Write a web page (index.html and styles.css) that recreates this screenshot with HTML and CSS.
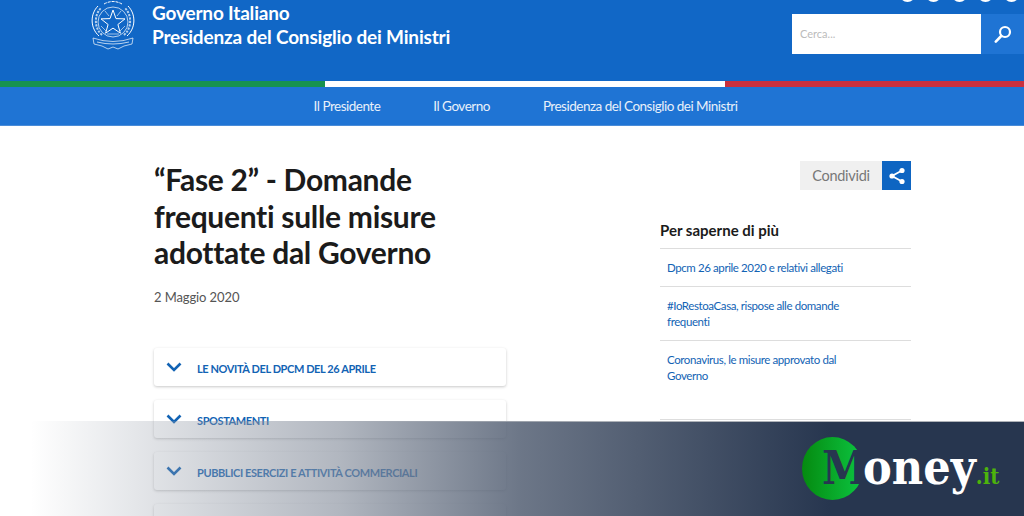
FILE: index.html
```html
<!DOCTYPE html>
<html lang="it">
<head>
<meta charset="utf-8">
<title>Fase 2 - Domande frequenti</title>
<link rel="stylesheet" href="styles.css">
</head>
<body>
<header class="top">
  <div class="brand">
    <svg class="emblem" viewBox="0 0 46 52" fill="none" stroke="#fff" stroke-width=".7">
      <circle cx="23" cy="23" r="15"/>
      <path d="M9 37C0 29 0 15 8 7M37 37c9-8 9-22 1-30" stroke-width="1"/>
      <path d="M12 36C4 29 4 16 11 9M34 36c8-7 8-20 1-27" stroke-width="2" stroke-dasharray="2.2 1.2" opacity=".7"/>
      <path d="M14 5q9-5 18 0" stroke-width="1" stroke-dasharray="3 1"/>
      <path d="M23 11l3 8.6 9 .3-7.1 5.6 2.5 8.7-7.4-5.1-7.4 5.1 2.5-8.7-7.1-5.6 9-.3z" stroke-width="1"/>
      <path d="M15 12l4 5M31 12l-4 5M11 27l5 5M35 27l-5 5M17 35h12" stroke-width=".6"/>
      <path d="M3 39q20 7 40 0l-1 6-8 2-6 3-5-2-5 2-6-3-8-2z" fill="#1167c6" stroke-width=".8" stroke-opacity=".85"/>
      <path d="M7 43q16 4 32 0" stroke-width=".7"/>
    </svg>
    <div class="brand-text">
      <div>Governo Italiano</div>
      <div>Presidenza del Consiglio dei Ministri</div>
    </div>
  </div>
  <div class="tools">
    <div class="socials"><i></i><i></i><i></i><i></i><i></i></div>
    <form class="search">
      <span class="search-input">Cerca...</span>
      <span class="search-btn">
        <svg viewBox="0 0 18 18" width="18" height="18" fill="none" stroke="#fff">
          <circle cx="11" cy="7" r="5" stroke-width="2.2"/>
          <path d="M7.2 11 1.8 16.6" stroke-width="2.6" stroke-linecap="round"/>
        </svg>
      </span>
    </form>
  </div>
</header>
<div class="tricolor"><span class="green"></span><span class="white"></span><span class="red"></span></div>
<nav class="nav">
  <a>Il Presidente</a>
  <a>Il Governo</a>
  <a>Presidenza del Consiglio dei Ministri</a>
</nav>
<main class="main">
  <section class="article">
    <h1>“Fase 2” - Domande frequenti sulle misure adottate dal Governo</h1>
    <p class="date">2 Maggio 2020</p>
    <div class="accordion">
      <div class="acc"><svg class="chev" viewBox="0 0 16 10"><path d="M1.5 1.5 8 8l6.5-6.5"/></svg><span>Le novità del DPCM del 26 aprile</span></div>
      <div class="acc"><svg class="chev" viewBox="0 0 16 10"><path d="M1.5 1.5 8 8l6.5-6.5"/></svg><span>Spostamenti</span></div>
      <div class="acc"><svg class="chev" viewBox="0 0 16 10"><path d="M1.5 1.5 8 8l6.5-6.5"/></svg><span>Pubblici esercizi e attività commerciali</span></div>
      <div class="acc"></div>
    </div>
  </section>
  <aside class="side">
    <div class="share">
      <span class="share-label">Condividi</span>
      <span class="share-btn">
        <svg viewBox="0 0 18 18" width="18" height="18" fill="#fff" stroke="#fff">
          <path d="M14 3.5 4 9l10 5.5" fill="none" stroke-width="1.8"/>
          <circle cx="14" cy="3.5" r="2.6" stroke="none"/>
          <circle cx="4" cy="9" r="2.6" stroke="none"/>
          <circle cx="14" cy="14.5" r="2.6" stroke="none"/>
        </svg>
      </span>
    </div>
    <h2>Per saperne di più</h2>
    <ul class="links">
      <li>Dpcm 26 aprile 2020 e relativi allegati</li>
      <li>#IoRestoaCasa, rispose alle domande frequenti</li>
      <li>Coronavirus, le misure approvato dal Governo</li>
    </ul>
    <div class="side-end"></div>
  </aside>
</main>
<div class="banner">
  <div class="logo">
    <span class="logo-m">M</span><span class="logo-name">oney</span><span class="logo-it">.it</span>
  </div>
</div>
</body>
</html>
```
FILE: styles.css
```css
* { box-sizing: border-box; }
html, body { margin: 0; height: 516px; overflow: hidden; background: #fff; }
body { font-family: Lato, "Noto Sans", "Liberation Sans", sans-serif; font-variant-ligatures: none; color: #222; position: relative; }

.top { height: 81px; background: #1167c6; display: flex; justify-content: space-between; padding-left: 90px; overflow: hidden; }
.brand { display: flex; align-items: flex-start; gap: 16px; }
.emblem { width: 46px; height: 52px; margin-top: -1px; }
.brand-text { color: #fff; font-weight: 700; font-size: 19px; line-height: 24px; padding-top: 1px; letter-spacing: -.18px; }

.tools { width: 232px; display: flex; flex-direction: column; align-items: flex-end; }
.socials { display: flex; gap: 11px; height: 14px; margin-top: -12px; padding-right: 5px; }
.socials i { width: 15px; height: 14px; border-radius: 50%; background: #fff; }
.search { display: flex; margin-top: 12px; width: 232px; height: 40px; }
.search-input { width: 189px; background: #fff; color: #bbb; font-size: 11px; line-height: 40px; padding-left: 8px; }
.search-btn { width: 40px; flex: 1; background: #1f74d4; display: flex; align-items: center; justify-content: center; padding-bottom: 1px; }

.tricolor { display: flex; height: 6px; }
.tricolor span { display: block; }
.green { width: 325px; background: #17924f; }
.white { width: 400px; background: #fff; }
.red { flex: 1; background: #c9303e; }

.nav { height: 39px; background: #1f74d4; display: flex; justify-content: center; gap: 53px; align-items: center; color: #e8f0fa; font-size: 13.5px; font-weight: 400; letter-spacing: -.5px; padding-left: 27px; border-bottom: 1px solid #4a8cd8; padding-bottom: 1px; }

.main { display: flex; padding-left: 154px; height: 390px; overflow: hidden; }
.article { width: 352px; padding-top: 35px; }
h1 { margin: 0; font-size: 30px; line-height: 36.5px; font-weight: 700; color: #1b1b1b; letter-spacing: -.3px; width: 300px; }
.date { margin: 16px 0 0; font-size: 13px; line-height: 20px; color: #555; letter-spacing: -.1px; }
.accordion { display: flex; flex-direction: column; gap: 14px; margin-top: 41px; }
.acc { height: 38px; flex: none; background: #fff; border-radius: 3px; box-shadow: 0 1px 3px rgba(0,0,0,.22); display: flex; align-items: center; padding: 2px 0 0 12px; color: #1263b4; font-size: 11px; font-weight: 700; letter-spacing: -.4px; text-transform: uppercase; }
.acc span { margin-top: 1px; }
.chev { width: 16px; height: 10px; margin-right: 15px; margin-top: -2px; flex: none; fill: none; stroke: #1263b4; stroke-width: 2.6; }

.side { width: 251px; margin-left: 154px; padding-top: 35px; }
.share { display: flex; justify-content: flex-end; height: 29px; }
.share-label { width: 82px; background: #f0f0f0; color: #777; font-size: 14.5px; line-height: 29px; text-align: center; letter-spacing: -.3px; }
.share-btn { width: 29px; background: #0e65c2; display: flex; align-items: center; justify-content: center; }
h2 { margin: 29px 0 0; font-size: 15px; line-height: 22px; height: 30px; font-weight: 700; color: #1b1b1b; border-bottom: 1px solid #ddd; }
.links { list-style: none; margin: 0; padding: 0; }
.links li { padding: 11px 60px 10px 7px; border-bottom: 1px solid #ddd; font-size: 11.5px; line-height: 16px; color: #1263b4; letter-spacing: -.4px; }
.links li:last-child { border-bottom: 0; }
.side-end { margin-top: 25px; border-top: 1px solid #ddd; }

.banner { position: absolute; left: 0; right: 0; bottom: 0; height: 95px; background:
  linear-gradient(90deg, rgba(175,180,186,0) 300px, #aeb2b8 600px) 0 0 / 100% 1px no-repeat,
  linear-gradient(90deg, rgba(39,54,79,0) 30px, rgba(39,54,79,.36) 340px, rgba(39,54,79,.68) 520px, #27364f 830px),
  linear-gradient(90deg, rgba(255,255,255,.1) 100px, rgba(255,255,255,.5) 410px, rgba(255,255,255,.9) 800px); }
.logo { position: absolute; left: 802px; top: 16px; width: 210px; height: 64px; display: flex; align-items: baseline; font-family: "DejaVu Serif", serif; font-stretch: condensed; font-weight: 700; }
.logo-m { width: 61px; height: 63px; flex: none; border-radius: 50%; background: linear-gradient(90deg, #058a10, #0cc541); color: #27364f; font-size: 46px; line-height: 63px; padding-left: 20px; clip-path: inset(0 3px 0 0); white-space: nowrap; letter-spacing: -3px; }
.logo-name { color: #fff; font-size: 48px; }
.logo-it { color: #4db30c; font-size: 22px; }
```
